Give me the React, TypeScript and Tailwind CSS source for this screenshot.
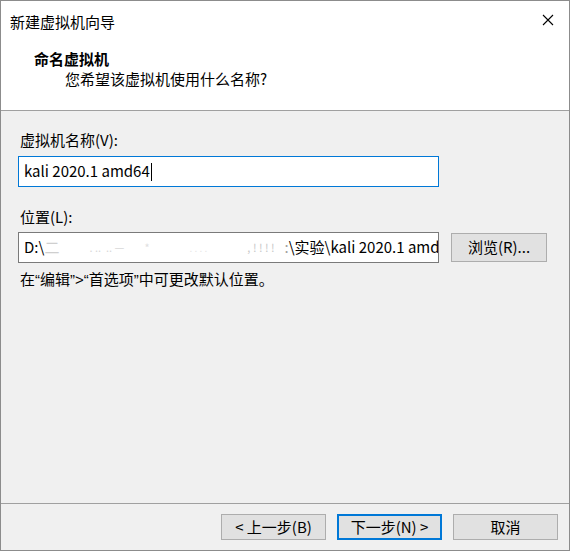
import React from "react";

const font = { fontFamily: '"Noto Sans CJK SC", "Noto Sans", sans-serif' };
const latin = { fontFamily: '"Liberation Sans", sans-serif' };

function Btn({ children, primary }: { children: React.ReactNode; primary?: boolean }) {
  return (
    <div
      className={
        "w-[105px] h-[26px] flex items-center justify-center text-[15px] text-black bg-[#e1e1e1] " +
        (primary ? "border-2 border-[#0078d7]" : "border border-[#adadad]")
      }
    >
      {children}
    </div>
  );
}

export default function App() {
  return (
    <div className="w-[572px] h-[554px] bg-white" style={font}>
      <div className="w-[570px] h-[551px] border border-[#8c8c8c] flex flex-col bg-[#f0f0f0] text-black">
        {/* title bar */}
        <div className="h-[36px] bg-white flex items-center justify-between pl-[9px] pr-[15px] pt-[4px]">
          <span className="text-[15px] leading-none">新建虚拟机向导</span>
          <svg width="12" height="12" viewBox="0 0 12 12" className="mt-[-2px]">
            <path d="M1 1 L11 11 M11 1 L1 11" stroke="#000" strokeWidth="1.1" />
          </svg>
        </div>
        {/* header */}
        <div className="h-[74px] bg-white border-b border-[#a0a0a0] flex flex-col">
          <div className="pl-[33px] pt-[12px] text-[15px] font-bold leading-[20px]">命名虚拟机</div>
          <div className="pl-[64px] pt-[0px] text-[15px] leading-[20px]">您希望该虚拟机使用什么名称?</div>
        </div>
        {/* body */}
        <div className="flex-1 flex flex-col px-[17px]">
          <div className="mt-[19px] pl-[2px] text-[15px] leading-[20px]">虚拟机名称(V):</div>
          <div className="mt-[6px] w-[421px] h-[31px] bg-white border border-[#0078d7] flex items-center pl-[5px] text-[15px]">
            <span>kali 2020.1 amd64</span>
            <span className="inline-block w-[1px] h-[18px] bg-black ml-[1px]" />
          </div>
          <div className="mt-[20px] pl-[2px] text-[15px] leading-[20px]">位置(L):</div>
          <div className="mt-[5px] flex items-start gap-[12px]">
            <div className="w-[421px] h-[31px] bg-white border border-[#7a7a7a] flex items-center pl-[5px] text-[15px] overflow-hidden whitespace-nowrap">
              <span>D:\</span>
              <span className="text-[#cfcfcf]">二</span>
              <span className="ml-[30px] text-[#d8d8d8] text-[11px]">. .. &nbsp;..  —</span>
              <span className="ml-[20px] text-[#e0e0e0] text-[11px]">*</span>
              <span className="ml-[40px] text-[#e6e6e6] text-[10px]">. . . .</span>
              <span className="ml-[40px] text-[#c8c8c8] text-[11px]">, ! ! ! !</span>
              <span className="ml-[10px] text-[#a0a0a0]">:</span>
              <span>\实验\kali 2020.1 amd64</span>
            </div>
            <div className="mt-[1px] w-[96px] h-[29px] bg-[#e1e1e1] border border-[#adadad] flex items-center justify-center text-[15px]">
              浏览(R)...
            </div>
          </div>
          <div className="mt-[6px] pl-[2px] text-[15px] leading-[20px]">
            在<span style={latin}>“</span>编辑<span style={latin}>”&gt;“</span>首选项<span style={latin}>”</span>中可更改默认位置。
          </div>
        </div>
        {/* footer */}
        <div className="h-[47px] border-t border-[#a0a0a0] flex items-start justify-end gap-[11px] pr-[11px] pt-[10px]">
          <Btn>&lt; 上一步(B)</Btn>
          <Btn primary>下一步(N) &gt;</Btn>
          <Btn>取消</Btn>
        </div>
      </div>
    </div>
  );
}
